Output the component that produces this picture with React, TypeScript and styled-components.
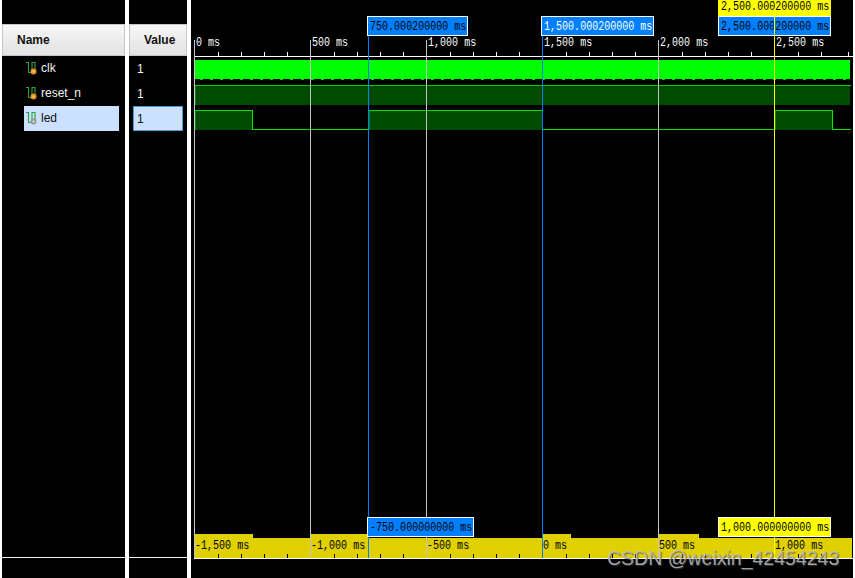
import React from "react";
import styled, { createGlobalStyle } from "styled-components";

const Global = createGlobalStyle`
  html, body { margin: 0; padding: 0; background: #fff; }
  #root { width: 855px; height: 578px; overflow: hidden; }
`;

const Page = styled.div`
  position: relative;
  width: 855px;
  height: 578px;
  padding: 0 2px;
  box-sizing: border-box;
  display: grid;
  grid-template-columns: 123px 58px 662px;
  column-gap: 4px;
  background: #fff;
  font-family: "Liberation Sans", Arial, sans-serif;
`;

const Column = styled.section`
  background: #000;
  display: flex;
  flex-direction: column;
  height: 578px;
  padding-top: 24px;
  box-sizing: border-box;
`;

const HeaderCell = styled.div<{ $pad: number }>`
  height: 32px;
  box-sizing: border-box;
  border: 1px solid #c6c6c6;
  background: linear-gradient(#f7f7f7, #e2e2e2);
  color: #111;
  font-size: 12px;
  font-weight: 700;
  line-height: 30px;
  padding-left: ${(p) => p.$pad}px;
`;

const Rows = styled.div`
  flex: 1;
  display: flex;
  flex-direction: column;
`;

const Row = styled.div`
  height: 25px;
  display: flex;
  align-items: center;
`;

const NameLabel = styled.div<{ $selected?: boolean }>`
  margin-left: 22px;
  width: 95px;
  height: 25px;
  display: flex;
  align-items: center;
  gap: 3px;
  padding: 0 0 1px 2px;
  box-sizing: border-box;
  font-size: 12px;
  color: ${(p) => (p.$selected ? "#111" : "#f4f4f4")};
  background: ${(p) => (p.$selected ? "#cce0ff" : "transparent")};
`;

const ValueLabel = styled.div<{ $selected?: boolean }>`
  margin-left: 4px;
  width: 50px;
  height: 25px;
  box-sizing: border-box;
  padding-left: 3px;
  font-size: 12px;
  line-height: 24px;
  color: ${(p) => (p.$selected ? "#111" : "#f4f4f4")};
  background: ${(p) => (p.$selected ? "#cce0ff" : "transparent")};
  border: 1px solid ${(p) => (p.$selected ? "#4a9bd8" : "transparent")};
`;

const Footer = styled.div`
  height: 20px;
  border-top: 1px solid #f0f0f0;
`;

const Timeline = styled.section`
  position: relative;
  background: #000;
  height: 578px;
  overflow: hidden;
`;

const Canvas = styled.svg`
  display: block;
`;

const Mono = styled.span`
  display: inline-block;
  font: 10px/12px "Liberation Mono", monospace;
  letter-spacing: 0.02px;
  transform: scaleY(1.2);
  white-space: pre;
`;

const RulerText = styled.span<{ $x: number; $y: number; $dark?: boolean }>`
  position: absolute;
  left: ${(p) => p.$x - 191}px;
  top: ${(p) => p.$y}px;
  line-height: 12px;
  color: ${(p) => (p.$dark ? "#000" : "#fff")};
`;

const Marker = styled.div<{ $x: number; $y: number; $w: number; $h: number; $tone: "blue" | "yellow"; $light?: boolean; $flat?: boolean }>`
  position: absolute;
  left: ${(p) => p.$x - 191}px;
  top: ${(p) => p.$y}px;
  width: ${(p) => p.$w}px;
  height: ${(p) => p.$h}px;
  box-sizing: border-box;
  border: ${(p) => (p.$flat ? "0" : "1px solid #fff")};
  background: ${(p) => (p.$tone === "blue" ? "#0080ff" : "#ffff00")};
  color: ${(p) => (p.$light ? "#fff" : "#000")};
  padding: ${(p) => (p.$flat ? "0 0 0 3px" : "3px 0 0 2px")};
  display: flex;
  align-items: center;
`;

const MarkerStem = styled.div`
  position: absolute;
  left: ${774 - 191}px;
  top: 16px;
  width: 1px;
  height: 20px;
  background: #ffff00;
`;

const Watermark = styled.div`
  position: absolute;
  left: 607px;
  top: 546px;
  font-size: 19.5px;
  line-height: 24px;
  color: rgba(190, 190, 190, 0.85);
  text-shadow: 1px 1px 1px rgba(70, 70, 70, 0.7);
  white-space: nowrap;
`;

function SignalIcon({ kind }: { kind: "orange" | "gray" }) {
  return (
    <svg width="12" height="14" viewBox="0 0 12 14" style={{ flex: "none" }}>
      <path d="M0 1.5h2.5v10h3.5V1.5h3V9" fill="none" stroke="#2ea043" strokeWidth="1.1" />
      <circle cx="7.5" cy="10.5" r="3" fill={kind === "orange" ? "#e8912a" : "#9a9a9a"} />
      <circle cx="7.5" cy="10.5" r="1.1" fill={kind === "orange" ? "#f8d070" : "#e4e4e4"} />
    </svg>
  );
}

// All drawing coordinates below are page x minus 191 (the timeline's left edge).
const off = 191;
const px = (t: number) => 194.5 + t * 0.232 - off;

const majors = [0, 500, 1000, 2000];
const blues = [750, 1500];

function ticks(y1: number, y2: number, colour: string) {
  const out: React.ReactNode[] = [];
  for (let i = 1; i <= 27; i++) {
    if (i % 5 === 0) continue;
    const x = Math.round(px(i * 100)) + 0.5;
    out.push(<line key={`${y1}-${i}`} x1={x} x2={x} y1={y1} y2={y2} stroke={colour} />);
  }
  return out;
}

function clkDots() {
  const out: React.ReactNode[] = [];
  for (let x = 200; x < 850; x += 10.05) {
    out.push(<rect key={x} x={Math.round(x) - off} y={79} width={3} height={1} fill="#00e000" />);
  }
  return out;
}

const ledHigh: [number, number][] = [
  [194, 252],
  [368, 542],
  [774, 832],
];

function Waves() {
  const bright = "#00e600";
  const s = (x: number) => x - off;
  return (
    <Canvas width={662} height={578}>
      {/* top ruler */}
      <line x1={s(194)} x2={s(853)} y1={56.5} y2={56.5} stroke="#fff" />
      {ticks(52, 56, "#fff")}
      <line x1={s(848.5)} x2={s(848.5)} y1={52} y2={56} stroke="#fff" />

      {/* clk */}
      <rect x={s(194)} y={60} width={656} height={19} fill="#00ff00" />
      {clkDots()}

      {/* reset_n */}
      <rect x={s(195)} y={86} width={655} height={19} fill="#004a00" />
      <line x1={s(195)} x2={s(851)} y1={85.5} y2={85.5} stroke="#00d000" />
      <line x1={s(195.5)} x2={s(195.5)} y1={86} y2={105} stroke="#008a00" />

      {/* led */}
      {ledHigh.map(([a, b]) => (
        <g key={a}>
          <rect x={s(a + 1)} y={111} width={b - a - 1} height={19} fill="#004a00" />
          <line x1={s(a + 1.5)} x2={s(a + 1.5)} y1={111} y2={130} stroke="#008a00" />
          <line x1={s(a)} x2={s(b + 1)} y1={110.5} y2={110.5} stroke={bright} />
          <line x1={s(b + 0.5)} x2={s(b + 0.5)} y1={110} y2={130} stroke={bright} />
        </g>
      ))}
      <line x1={s(253)} x2={s(368)} y1={129.5} y2={129.5} stroke={bright} />
      <line x1={s(542)} x2={s(774)} y1={129.5} y2={129.5} stroke={bright} />
      <line x1={s(832)} x2={s(851)} y1={129.5} y2={129.5} stroke={bright} />

      {/* bottom ruler band */}
      <rect x={s(194)} y={538} width={658} height={20} fill="#e0d000" />
      <rect x={s(194)} y={534} width={59} height={4} fill="#e0d000" />
      <rect x={s(310)} y={534} width={58} height={4} fill="#e0d000" />
      <rect x={s(542)} y={534} width={29} height={4} fill="#e0d000" />
      <rect x={s(658)} y={534} width={41} height={4} fill="#e0d000" />
      <line x1={s(194)} x2={s(853)} y1={558.5} y2={558.5} stroke="#fff" />
      {ticks(554, 558, "#000")}

      {/* grid lines */}
      {majors.map((t) => {
        const x = Math.floor(px(t)) + 0.5;
        return <line key={t} x1={x} x2={x} y1={40} y2={558} stroke="#c4c4c4" />;
      })}
      {blues.map((t) => {
        const x = Math.floor(px(t)) + 0.5;
        return <line key={t} x1={x} x2={x} y1={36} y2={558} stroke="#0080ff" />;
      })}
      <line x1={s(774.5)} x2={s(774.5)} y1={36} y2={517} stroke="#ffff00" />
      <line x1={s(774.5)} x2={s(774.5)} y1={537} y2={558} stroke="#ffff00" />
    </Canvas>
  );
}

const topRuler: [number, string][] = [
  [196, "0 ms"],
  [312, "500 ms"],
  [428, "1,000 ms"],
  [544, "1,500 ms"],
  [660, "2,000 ms"],
  [776, "2,500 ms"],
];

const bottomRuler: [number, string][] = [
  [196, "-1,500 ms"],
  [312, "-1,000 ms"],
  [428, "-500 ms"],
  [544, "0 ms"],
  [660, "500 ms"],
  [776, "1,000 ms"],
];

const signals: { name: string; icon: "orange" | "gray"; selected?: boolean }[] = [
  { name: "clk", icon: "orange" },
  { name: "reset_n", icon: "orange" },
  { name: "led", icon: "gray", selected: true },
];

export default function App() {
  return (
    <Page>
      <Global />
      <Column>
        <HeaderCell $pad={14}>Name</HeaderCell>
        <Rows>
          {signals.map((s) => (
            <Row key={s.name}>
              <NameLabel $selected={s.selected}>
                <SignalIcon kind={s.icon} />
                {s.name}
              </NameLabel>
            </Row>
          ))}
        </Rows>
        <Footer />
      </Column>
      <Column>
        <HeaderCell $pad={14}>Value</HeaderCell>
        <Rows>
          {signals.map((s) => (
            <Row key={s.name}>
              <ValueLabel $selected={s.selected}>1</ValueLabel>
            </Row>
          ))}
        </Rows>
        <Footer />
      </Column>
      <Timeline>
        <Waves />
        {topRuler.map(([x, t]) => (
          <RulerText key={t} $x={x} $y={35}>
            <Mono>{t}</Mono>
          </RulerText>
        ))}
        {bottomRuler.map(([x, t]) => (
          <RulerText key={t} $x={x - 1} $y={538} $dark>
            <Mono>{t}</Mono>
          </RulerText>
        ))}
        <Marker $x={367} $y={16} $w={101} $h={20} $tone="blue"><Mono>750.000200000 ms</Mono></Marker>
        <Marker $x={541} $y={16} $w={113} $h={20} $tone="blue" $light><Mono>1,500.000200000 ms</Mono></Marker>
        <Marker $x={718} $y={0} $w={113} $h={16} $tone="yellow" $flat><Mono>2,500.000200000 ms</Mono></Marker>
        <Marker $x={718} $y={16} $w={113} $h={20} $tone="blue"><Mono>2,500.000200000 ms</Mono></Marker>
        <MarkerStem />
        <Marker $x={367} $y={517} $w={107} $h={20} $tone="blue"><Mono>-750.000000000 ms</Mono></Marker>
        <Marker $x={718} $y={517} $w={113} $h={20} $tone="yellow"><Mono>1,000.000000000 ms</Mono></Marker>
      </Timeline>
      <Watermark>CSDN @weixin_42454243</Watermark>
    </Page>
  );
}
